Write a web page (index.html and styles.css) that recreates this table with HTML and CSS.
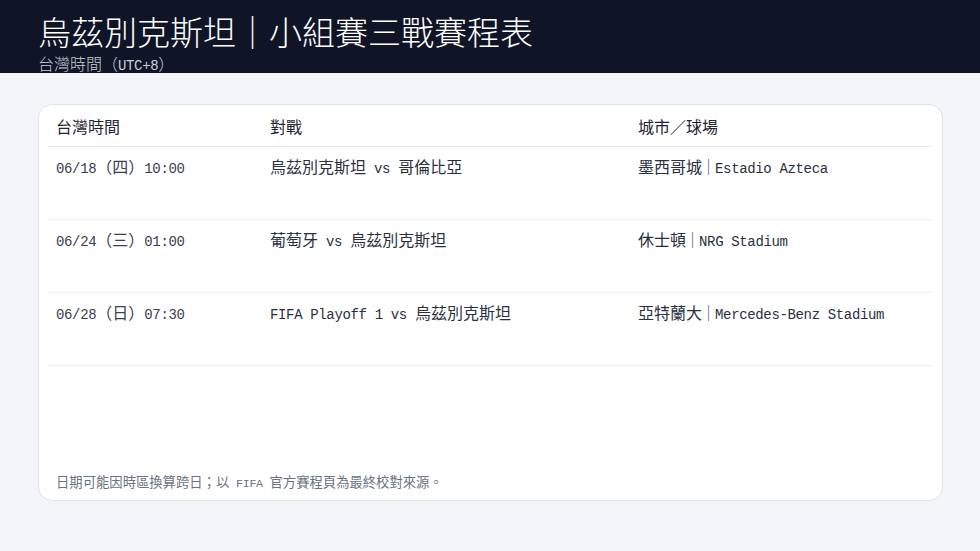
FILE: index.html
```html
<!DOCTYPE html>
<html lang="zh-Hant">
<head>
<meta charset="utf-8">
<title>烏茲別克斯坦｜小組賽三戰賽程表</title>
<link rel="stylesheet" href="styles.css">
</head>
<body>
<header class="topbar">
  <h1 class="title">烏茲別克斯坦｜小組賽三戰賽程表</h1>
  <div class="subtitle">台灣時間（<span class="lt">UTC+8</span>）</div>
</header>
<main class="main">
  <section class="card">
    <table class="schedule">
      <colgroup>
        <col class="c-time">
        <col class="c-match">
        <col class="c-venue">
      </colgroup>
      <thead>
        <tr><th>台灣時間</th><th>對戰</th><th>城市／球場</th></tr>
      </thead>
      <tbody>
        <tr>
          <td><span class="lt">06/18</span>（四）<span class="lt">10:00</span></td>
          <td>烏茲別克斯坦<span class="lt"> vs </span>哥倫比亞</td>
          <td>墨西哥城<span class="sep">｜</span><span class="lt">Estadio Azteca</span></td>
        </tr>
        <tr>
          <td><span class="lt">06/24</span>（三）<span class="lt">01:00</span></td>
          <td>葡萄牙<span class="lt"> vs </span>烏茲別克斯坦</td>
          <td>休士頓<span class="sep">｜</span><span class="lt">NRG Stadium</span></td>
        </tr>
        <tr>
          <td><span class="lt">06/28</span>（日）<span class="lt">07:30</span></td>
          <td><span class="lt">FIFA Playoff 1 vs </span>烏茲別克斯坦</td>
          <td>亞特蘭大<span class="sep">｜</span><span class="lt">Mercedes-Benz Stadium</span></td>
        </tr>
      </tbody>
    </table>
    <p class="note">日期可能因時區換算跨日；以<span class="lt"> FIFA </span>官方賽程頁為最終校對來源。</p>
  </section>
</main>
</body>
</html>
```

FILE: styles.css
```css
* { box-sizing: border-box; }
html, body { margin: 0; padding: 0; }
body {
  background: #f4f5f9;
  font-family: "Noto Sans CJK TC", "Noto Sans CJK SC", sans-serif;
  color: #1f2533;
  width: 980px;
  height: 551px;
  overflow: hidden;
}
.lt {
  font-family: "Liberation Mono", "DejaVu Sans Mono", monospace;
  font-size: 0.875em;
  letter-spacing: -0.025em;
  line-height: 1;
}
.topbar {
  background: #0f1526;
  height: 73px;
  padding: 13px 0 0 38px;
}
.title {
  margin: 0;
  font-size: 33px;
  line-height: 36px;
  font-weight: 300;
  color: #ffffff;
  white-space: nowrap;
}
.subtitle {
  margin-top: 4px;
  font-size: 16px;
  line-height: 20px;
  color: #c8cdd7;
  font-weight: 300;
}
.main {
  padding: 31px 37px 0 38px;
}
.card {
  height: 397px;
  background: #ffffff;
  border: 1px solid #e1e3ea;
  border-radius: 14px;
  padding: 0 11px 0 9px;
  display: flex;
  flex-direction: column;
}
.schedule {
  width: 883px;
  border-collapse: collapse;
  table-layout: fixed;
  font-size: 16px;
}
.c-time { width: 214px; }
.c-match { width: 368px; }
.c-venue { width: 301px; }
.schedule th {
  text-align: left;
  font-weight: 400;
  line-height: 20px;
  height: 41px;
  padding: 11px 8px 9px;
  border-bottom: 1px solid #e4e6eb;
  color: #1f2533;
}
.schedule td {
  line-height: 20px;
  height: 73px;
  padding: 9px 8px 43px;
  border-bottom: 1px solid #eef0f5;
  vertical-align: top;
  white-space: nowrap;
  color: #2a3040;
}
.schedule td:first-child { color: #3a4150; }
.sep {
  margin: 0 -1.5px;
  color: #4a5160;
}
.note {
  margin: auto 0 0;
  padding: 0 8px 9px;
  font-size: 13.33px;
  line-height: 18px;
  color: #6b7280;
}
```
